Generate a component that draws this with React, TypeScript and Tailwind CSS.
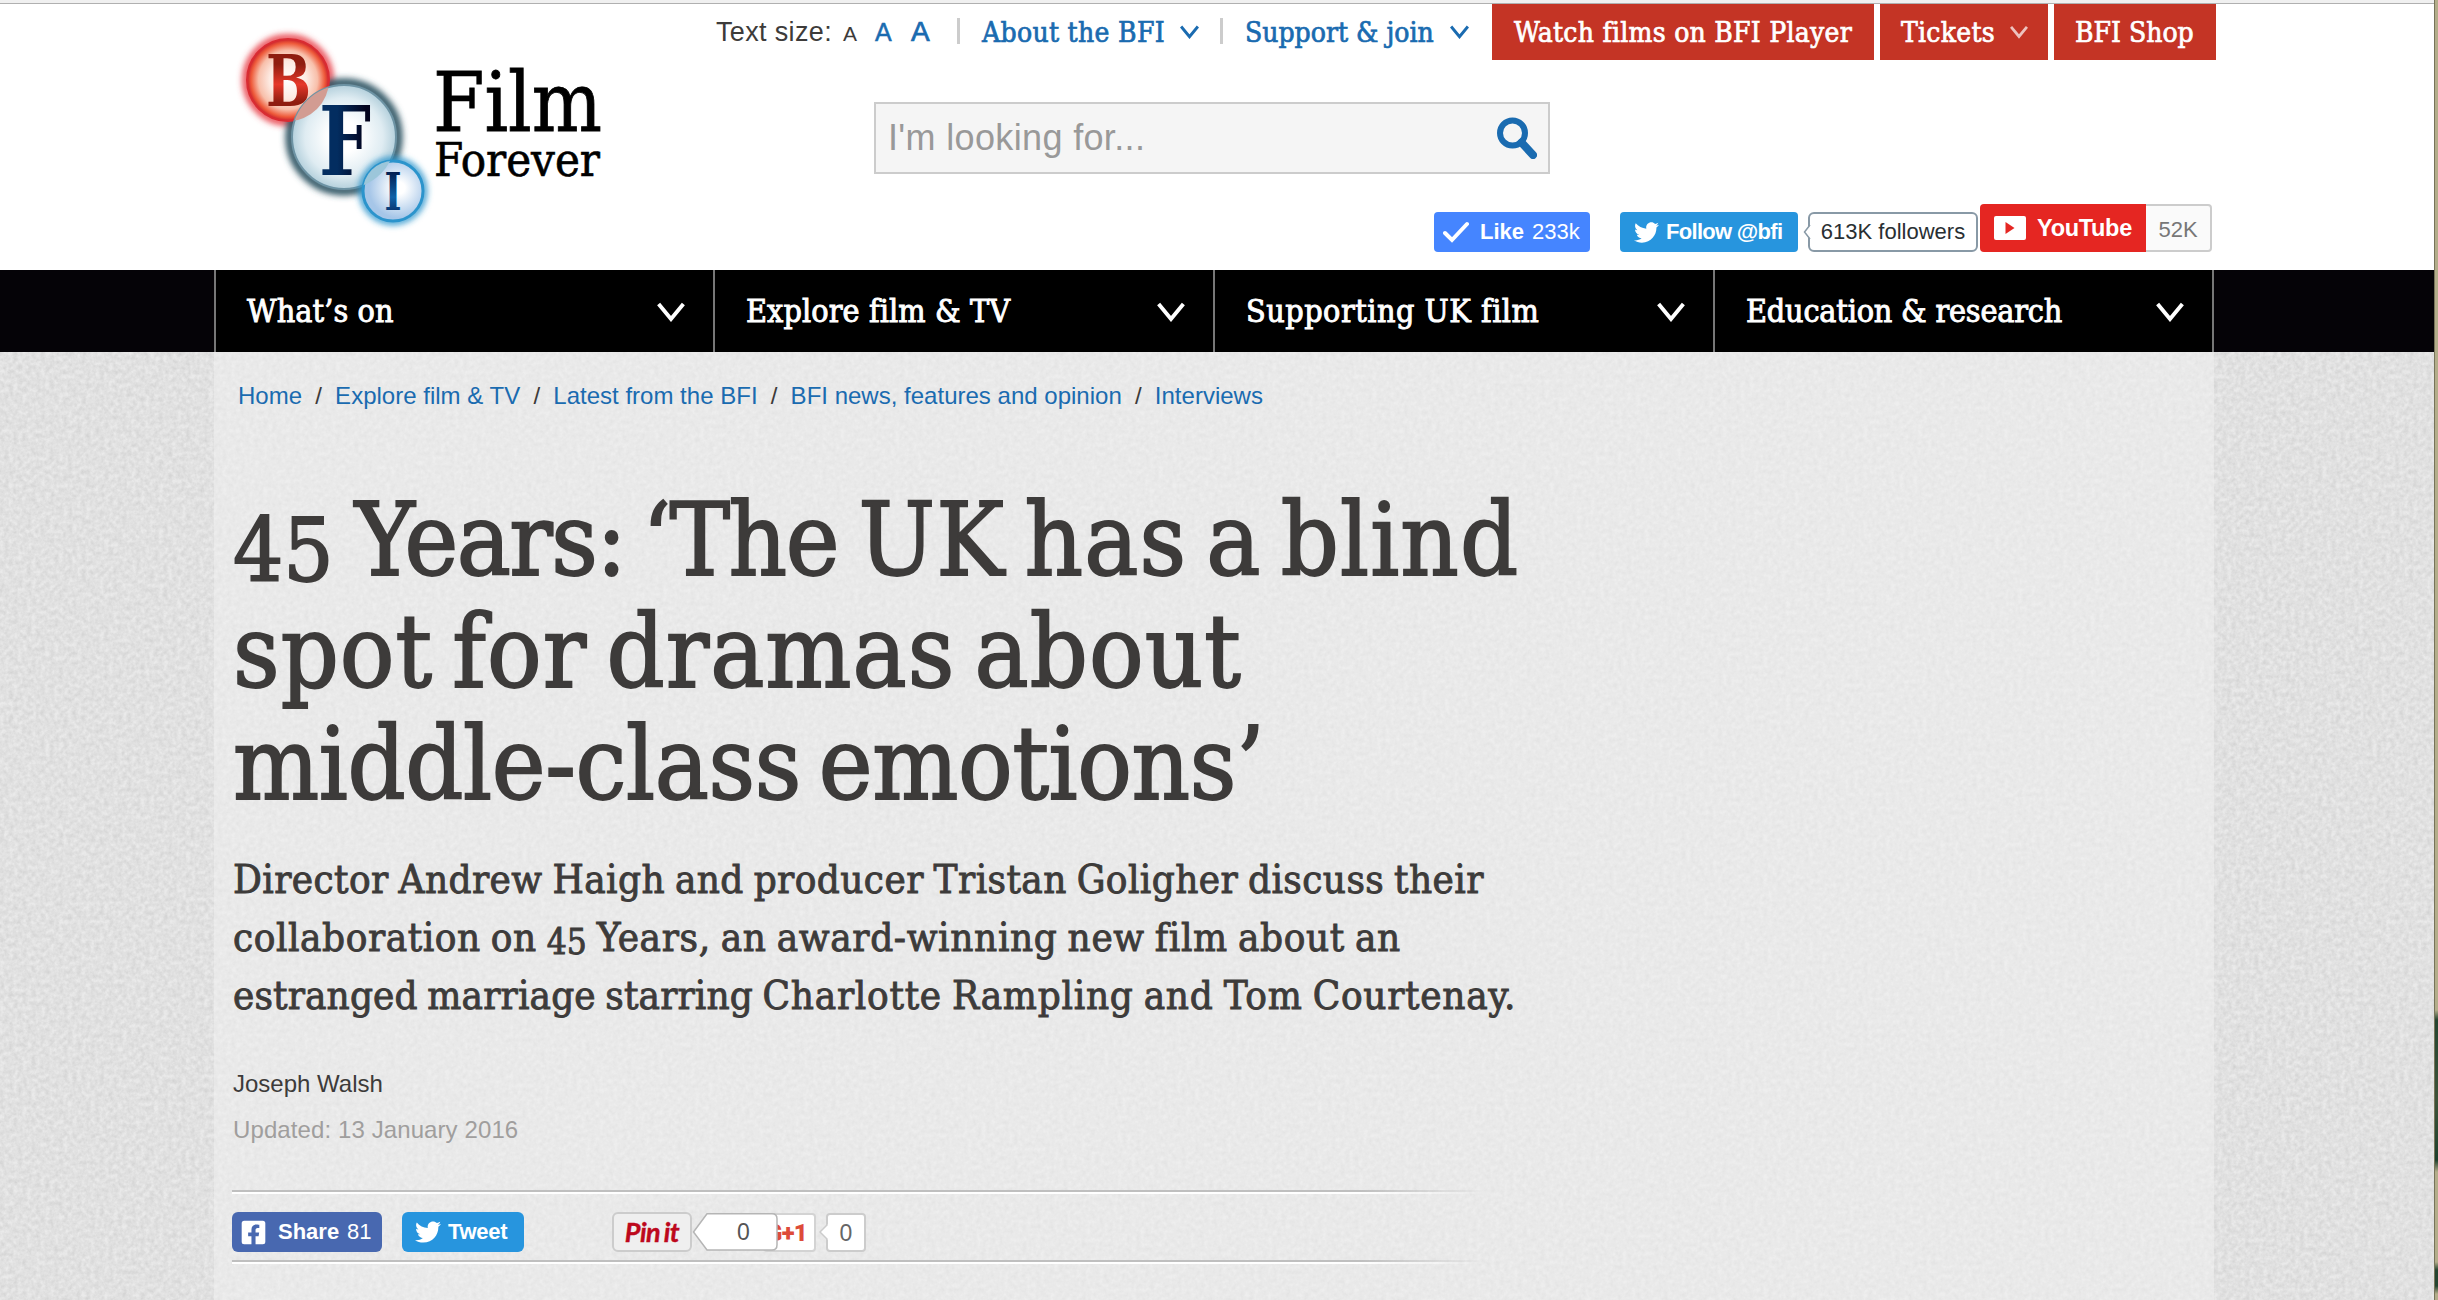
import React from "react";
import { clsx } from "clsx";
import { FaFacebookSquare, FaTwitter } from "react-icons/fa";

const serif = "font-['DejaVu_Serif_Condensed','DejaVu_Serif',serif]";

const navItems = [
  { label: "What’s on", tracking: "tracking-[0.1px]", width: "w-[499px]" },
  { label: "Explore film & TV", tracking: "tracking-[0.1px]", width: "w-[500px]" },
  { label: "Supporting UK film", tracking: "tracking-[0.5px]", width: "w-[500px]" },
  { label: "Education & research", tracking: "tracking-[-0.2px]", width: "w-[499px]" },
];

const crumbs = [
  "Home",
  "Explore film & TV",
  "Latest from the BFI",
  "BFI news, features and opinion",
  "Interviews",
];

interface ChevronProps {
  className?: string;
  stroke?: number;
}

const Chevron: React.FC<ChevronProps> = ({ className, stroke = 3 }) => (
  <svg
    viewBox="0 0 26 18"
    fill="none"
    stroke="currentColor"
    strokeWidth={stroke}
    className={clsx("shrink-0", className)}
  >
    <path d="M1.5 1.5 13 15.5 24.5 1.5" />
  </svg>
);

const Logo = () => (
  <svg viewBox="214 4 500 266" className="w-[500px] h-[266px] shrink-0">
    <defs>
      <radialGradient id="red">
        <stop offset="0" stopColor="#fff" />
        <stop offset="0.45" stopColor="#fdeae2" />
        <stop offset="0.72" stopColor="#f8bfaa" />
        <stop offset="0.9" stopColor="#ee5a3a" />
        <stop offset="1" stopColor="#c9202c" />
      </radialGradient>
      <radialGradient id="grey">
        <stop offset="0.3" stopColor="#fff" />
        <stop offset="0.75" stopColor="#dfecf2" />
        <stop offset="1" stopColor="#b4d0dc" />
      </radialGradient>
      <radialGradient id="blue" cx="0.6" cy="0.45">
        <stop offset="0.2" stopColor="#fff" />
        <stop offset="1" stopColor="#a6c6e8" />
      </radialGradient>
      <linearGradient id="letterB" x1="0" y1="0" x2="0" y2="1">
        <stop offset="0.3" stopColor="#8f1d10" />
        <stop offset="0.54" stopColor="#e6382a" />
        <stop offset="0.75" stopColor="#8f1d10" />
      </linearGradient>
      <linearGradient id="letterF">
        <stop offset="0.35" stopColor="#032d60" />
        <stop offset="0.9" stopColor="#02021c" />
      </linearGradient>
      <linearGradient id="letterI" x1="0" y1="0" x2="0" y2="1">
        <stop offset="0.2" stopColor="#031f52" />
        <stop offset="0.6" stopColor="#0f62a8" />
        <stop offset="0.85" stopColor="#07306a" />
      </linearGradient>
      <filter id="glow" x="-30%" y="-30%" width="160%" height="160%">
        <feGaussianBlur stdDeviation="3.2" />
      </filter>
      <clipPath id="clipF">
        <circle cx="344" cy="137" r="52" />
      </clipPath>
      <clipPath id="clipI">
        <circle cx="393" cy="191" r="30" />
      </clipPath>
    </defs>

    <circle cx="288" cy="80" r="42" fill="none" stroke="#e8404a" strokeWidth="7" filter="url(#glow)" />
    <circle cx="344" cy="137" r="54" fill="none" stroke="#2f5464" strokeWidth="9" filter="url(#glow)" />
    <circle cx="288" cy="80" r="41" fill="url(#red)" stroke="#d92c33" strokeWidth="2" />
    <text
      x="266"
      y="106"
      fontSize="71"
      fontWeight="700"
      textLength="45"
      lengthAdjust="spacingAndGlyphs"
      fill="url(#letterB)"
      fontFamily="DejaVu Serif Condensed, DejaVu Serif, serif"
    >
      B
    </text>
    <circle cx="344" cy="137" r="52" fill="url(#grey)" stroke="#6d93a4" strokeWidth="2" />
    <circle cx="288" cy="80" r="41" fill="#d29c92" clipPath="url(#clipF)" />
    <circle cx="393" cy="191" r="31" fill="none" stroke="#2b94cc" strokeWidth="6" filter="url(#glow)" />
    <circle cx="393" cy="191" r="30" fill="url(#blue)" stroke="#2b94cc" strokeWidth="3" />
    <circle cx="344" cy="137" r="52" fill="#9cc6da" clipPath="url(#clipI)" />
    <text
      x="319"
      y="175"
      fontSize="96"
      fontWeight="700"
      textLength="52"
      lengthAdjust="spacingAndGlyphs"
      fill="url(#letterF)"
      fontFamily="DejaVu Serif Condensed, DejaVu Serif, serif"
    >
      F
    </text>
    <text
      x="384.5"
      y="210"
      fontSize="53"
      fontWeight="700"
      textLength="17"
      lengthAdjust="spacingAndGlyphs"
      fill="url(#letterI)"
      fontFamily="DejaVu Serif Condensed, DejaVu Serif, serif"
    >
      I
    </text>
    <g fill="#000" stroke="#000" fontFamily="DejaVu Serif Condensed, DejaVu Serif, serif">
      <text x="433" y="130.500" fontSize="82" strokeWidth="0.8" textLength="169" lengthAdjust="spacingAndGlyphs">
        Film
      </text>
      <text x="434" y="175.500" fontSize="46" strokeWidth="0.6" textLength="166" lengthAdjust="spacingAndGlyphs">
        Forever
      </text>
    </g>
  </svg>
);

const Divider = () => <span className="w-[3px] h-[26px] -mt-[2px] bg-[#ccc]" />;

const TopBar = () => (
  <div className="flex items-center h-14 text-[28px] leading-[57px] text-[#1a6bb0] whitespace-nowrap">
    <div className="flex items-baseline w-[241px] text-[27px] leading-[57px]">
      <span className="w-[127px] text-[#3d3b3a] tracking-[0.35px]">Text size:</span>
      <span className="w-8 text-[21px] text-[#3d3b3a]">A</span>
      <span className="w-9 text-[25px] [-webkit-text-stroke:0.5px]">A</span>
      <span className="text-[28px] [-webkit-text-stroke:0.7px]">A</span>
    </div>
    <Divider />
    <div className={clsx("flex items-center ml-[22px] mr-[22px] [-webkit-text-stroke:0.7px]", serif)}>
      <span className="w-[198px] tracking-[0.3px]">About the BFI</span>
      <Chevron className="w-[19px] h-[14px] -mr-px" stroke={4} />
    </div>
    <Divider />
    <div className={clsx("flex items-center ml-[22px] mr-6 [-webkit-text-stroke:0.7px]", serif)}>
      <span className="w-[205px]">Support &amp; join</span>
      <Chevron className="w-[19px] h-[14px] -mr-px" stroke={4} />
    </div>
    <div className={clsx("flex gap-1.5 h-14 text-white [-webkit-text-stroke:0.7px]", serif)}>
      <span className="w-[382px] bg-[#c43425] pl-[22px] tracking-[0.25px]">Watch films on BFI Player</span>
      <span className="w-[168px] bg-[#c43425] pl-[21px] pr-5 flex items-center justify-between tracking-[0.25px]">
        Tickets
        <Chevron className="w-[18px] h-[14px] opacity-70" stroke={4} />
      </span>
      <span className="w-[162px] bg-[#c43425] pl-[21px]">BFI Shop</span>
    </div>
  </div>
);

const SearchBox = () => (
  <div className="ml-[158px] mt-[42px] w-[676px] h-[72px] flex items-center justify-between border-2 border-[#ccc] bg-[#f5f5f5] pl-3 pr-[11px]">
    <span className="text-[36px] tracking-[0.35px] leading-[70px] text-[#999]">I'm looking for...</span>
    <svg viewBox="0 0 40 42" fill="none" stroke="#1a6bb0" className="w-10 h-[42px]">
      <circle cx="15.500" cy="16" r="12.500" strokeWidth="6" />
      <path d="M24.500 25.500 36 38" strokeWidth="8" strokeLinecap="round" />
    </svg>
  </div>
);

const SocialBar = () => (
  <div className="flex items-end justify-end mt-[30px] h-12 mr-1 text-[22px] leading-10 whitespace-nowrap">
    <div className="w-[156px] h-10 mr-[30px] flex items-center rounded bg-[#4585ff] pl-[9px] text-white">
      <svg viewBox="0 0 26 22" fill="none" stroke="currentColor" strokeWidth="4" className="w-[26px] h-[22px]">
        <path d="M2 12 9 19 24 3" strokeLinecap="round" />
      </svg>
      <b className="ml-[11px] mr-[9px] w-[43px]">Like</b>
      <span>233k</span>
    </div>
    <div className="w-[178px] h-10 flex items-center rounded bg-[#2795de] pl-3.5 text-white">
      <FaTwitter className="w-[25px] h-[25px]" />
      <b className="ml-[7px] tracking-[-0.7px]">Follow @bfi</b>
    </div>
    <div className="relative ml-2.5 w-[170px] h-10 border-2 border-[#8899a6] rounded-md bg-white text-[#292f33] text-center leading-9">
      <svg viewBox="0 0 8 16" className="absolute -left-[7px] top-[10px] w-2 h-4">
        <path d="M7 1 1.500 8 7 15" fill="#fff" stroke="#8899a6" strokeWidth="1.500" />
        <path d="M8 2v12" stroke="#fff" strokeWidth="2" />
      </svg>
      613K followers
    </div>
    <div className="ml-0.5 h-12 flex">
      <div className="w-[166px] h-12 flex items-center rounded-l bg-[#e52622] pl-3.5 text-white">
        <svg viewBox="0 0 32 24" className="w-8 h-6">
          <rect width="32" height="24" rx="2" fill="#fff" />
          <path d="M11.500 6v12l9-6z" fill="#e52622" />
        </svg>
        <b className="ml-[11px] -mt-px text-[23.500px] tracking-[-0.3px]">YouTube</b>
      </div>
      <div className="w-[66px] h-12 border-2 border-l-0 border-[#ccc] rounded-r bg-[#fafafa] text-center leading-[48px] text-[#777]">
        52K
      </div>
    </div>
  </div>
);

const Header = () => (
  <header className="bg-white h-[266px] pl-[214px] flex">
    <Logo />
    <div className="ml-0.5 w-[1500px] shrink-0">
      <TopBar />
      <SearchBox />
      <SocialBar />
    </div>
  </header>
);

const MainNav = () => (
  <nav className="h-[82px] bg-[#050307] pl-[214px]">
    <ul className="flex w-[2000px] h-full border-r-2 border-[#777] bg-black">
      {navItems.map((item) => (
        <li
          key={item.label}
          className={clsx(
            "flex items-center justify-between border-l-2 border-[#777] pl-[31px] pr-[28px] text-white",
            item.width
          )}
        >
          <span className={clsx("text-[32px] leading-[80px] [-webkit-text-stroke:0.9px]", serif, item.tracking)}>
            {item.label}
          </span>
          <Chevron className="w-[28px] h-[20px] mt-0.5" stroke={3.6} />
        </li>
      ))}
    </ul>
  </nav>
);

// fine paper grain laid under the whole article area
const Grain = () => (
  <svg className="absolute inset-0 w-full h-full">
    <filter id="grain">
      <feTurbulence type="fractalNoise" baseFrequency="0.22" numOctaves="3" seed="4" />
      <feColorMatrix values="0 0 0 0 0  0 0 0 0 0  0 0 0 0 0  0.14 0 0 0 -0.03" />
    </filter>
    <rect width="100%" height="100%" filter="url(#grain)" />
  </svg>
);

const ShareBar = () => (
  <div className="flex items-start h-[66px] pt-[18px] text-[23px] leading-10">
    <div className="w-[150px] h-10 flex items-center rounded-md bg-[#4868b0] text-white pl-[8px] text-[22px]">
      <FaFacebookSquare className="w-[27px] h-[27px]" />
      <b className="ml-[11px] mr-[8px] w-[61px]">Share</b>
      <span>81</span>
    </div>
    <div className="ml-5 w-[122px] h-10 flex items-center rounded-md bg-[#2795de] text-white pl-[13px] text-[22px]">
      <FaTwitter className="w-[26px] h-[26px]" />
      <b className="ml-[7px] tracking-[-0.3px]">Tweet</b>
    </div>
    <div className="ml-[88px] w-20 h-10 rounded-md border-2 border-[#ccc] bg-[#efefef] text-center font-['Lato',sans-serif] italic font-bold text-[27px] leading-[35px] tracking-[-0.5px] [word-spacing:-2px] [-webkit-text-stroke:0.4px] text-[#bd081c]">
      Pin it
    </div>
    <div className="relative z-10 w-[87px] h-10">
      <svg viewBox="0 0 87 40" className="absolute inset-0 w-full h-full">
        <path d="M1.500 20 15 1.800H80q5 0 5 5V33q0 5-5 5H15z" fill="#fff" stroke="#b5b5b5" strokeWidth="1.500" />
      </svg>
      <span className="relative block pl-[45px] text-[#555] leading-10">0</span>
    </div>
    <div className="-ml-4 mt-px w-[53px] h-[39px] rounded border-2 border-[#d3d3d3] bg-white font-['Roboto',sans-serif] font-black text-[24px] leading-[36px] pr-[7px] tracking-[-0.7px] text-[#dd4b39] flex justify-end overflow-hidden">
      G+1
    </div>
    <div className="relative ml-[10px] mt-px w-10 h-[39px] rounded border-2 border-[#ccc] bg-white text-center text-[#666] leading-[37px]">
      <svg viewBox="0 0 9 16" className="absolute -left-[9px] top-[9px] w-[9px] h-4">
        <path d="M9 0 1 8l8 8z" fill="#fff" />
        <path d="M8.500 .5 1 8l7.500 7.500" fill="none" stroke="#ccc" strokeWidth="1.500" />
      </svg>
      0
    </div>
  </div>
);

const Rule = () => (
  <div className="w-[1254px]">
    <div className="h-0.5 bg-linear-to-r from-[#bfbfbf] from-90% to-transparent" />
    <div className="h-0.5 bg-linear-to-r from-white from-90% to-transparent" />
  </div>
);

const Article = () => (
  <main className="relative h-[948px] bg-[#eaeaea] pl-[214px] overflow-hidden">
    <Grain />
    <div className="relative w-[2000px] h-full bg-[#f1f1f1]/55 pl-[18px] text-[#3d3b3a]">
      <ol className="flex pt-[24px] pl-[6px] text-[24px] leading-[40px] text-[#1a6bb0] whitespace-nowrap">
        {crumbs.map((crumb, i) => (
          <li key={crumb}>
            {i > 0 && <span className="text-[#3d3b3a] px-[13.200px]">/</span>}
            <a className="tracking-[0.01px]">{crumb}</a>
          </li>
        ))}
      </ol>

      <h1
        className={clsx(
          "mt-[68px] ml-px text-[101px] leading-[112px] whitespace-nowrap [word-spacing:-10.7px] [-webkit-text-stroke:1.8px]",
          serif
        )}
      >
        <span className="relative top-[6px] text-[88px] leading-none">45</span>
        <span className="ml-[21px] tracking-[-1.5px]">Years: ‘The </span>
        <span className="ml-[4px] tracking-[1.1px]">UK has a blind</span>
        <br />
        <span className="tracking-[1.05px]">spot for dramas about</span>
        <br />
        <span className="tracking-[-0.35px]">middle-class emotions’</span>
      </h1>

      <p
        className={clsx(
          "mt-[30px] ml-px text-[40px] leading-[58px] whitespace-nowrap [word-spacing:-2px] [-webkit-text-stroke:0.9px]",
          serif
        )}
      >
        <span className="tracking-[0.42px]">Director Andrew Haigh and producer Tristan Goligher discuss their</span>
        <br />
        <span className="tracking-[0.56px]">collaboration on </span>
        <span className="relative top-[3px] text-[35px] leading-none">45</span>
        <span className="tracking-[0.64px]"> Years, an award-winning new film about an</span>
        <br />
        <span className="tracking-[0.15px]">estranged marriage starring </span>
        <span className="tracking-[0.72px]">Charlotte Rampling and Tom Courtenay.</span>
      </p>

      <div className="mt-[37px] ml-px text-[24px] leading-[46px]">
        <p>Joseph Walsh</p>
        <p className="text-[#a09e9d] tracking-[0.1px]">Updated: 13 January 2016</p>
      </div>

      <div className="mt-[37px]">
        <Rule />
        <ShareBar />
        <Rule />
      </div>
    </div>
  </main>
);

const App = () => (
  <div className="flex w-[2438px] h-[1300px] overflow-hidden font-['Liberation_Sans',Arial,sans-serif]">
    <div className="w-[2434px] shrink-0">
      <div className="h-1 bg-[#f0f0f0] border-b border-[#b0b0b0]" />
      <Header />
      <MainNav />
      <Article />
    </div>
    {/* sliver of the desktop beside the browser window */}
    <div className="w-1 h-full border-l border-[#77735a] bg-[linear-gradient(to_bottom,#b3ad8a_0px,#b3ad8a_1010px,#24442f_1020px,#3d5238_1100px,#1d402c_1160px,#b3ad8a_1172px,#b3ad8a_1262px,#24442f_1270px,#24442f_1286px,#b3ad8a_1294px)]" />
  </div>
);

export default App;
